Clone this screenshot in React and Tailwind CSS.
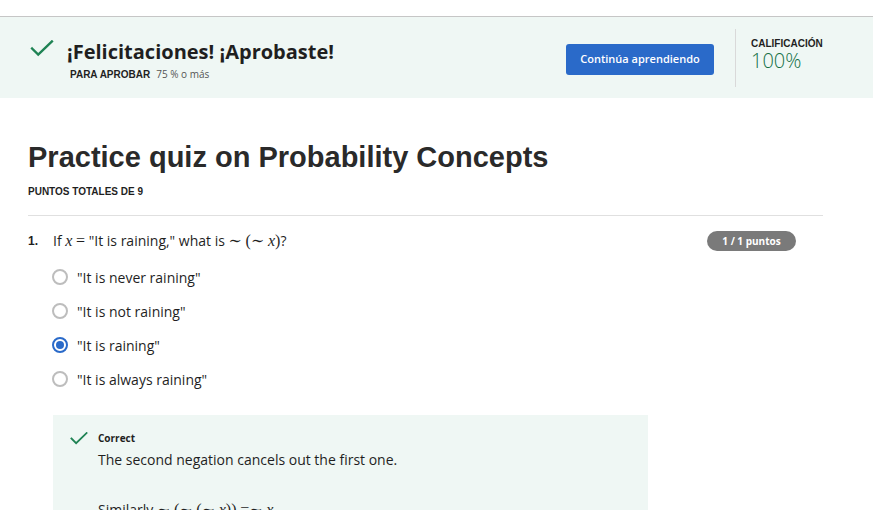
import React from "react";

const open = { fontFamily: '"Open Sans", "Liberation Sans", sans-serif' };

function Check({ className }) {
  return (
    <svg viewBox="0 0 24 18" className={className} fill="none">
      <polyline points="1.5,9 8,15.5 22.5,1.5" stroke="#1f8354" strokeWidth="2.5" strokeLinecap="square" />
    </svg>
  );
}

function Radio({ checked }) {
  if (checked)
    return (
      <span className="flex h-[16px] w-[16px] items-center justify-center rounded-full border-2 border-[#2a6ac9] bg-white">
        <span className="h-[8px] w-[8px] rounded-full bg-[#2a6ac9]" />
      </span>
    );
  return <span className="block h-[16px] w-[16px] rounded-full border-2 border-[#bdbdbd] bg-white" />;
}

const M = ({ children, i }) => (
  <span className={"font-['Liberation_Serif','DejaVu_Serif',serif] text-[16px] " + (i ? "italic" : "")}>{children}</span>
);

export default function App() {
  const options = [
    ['"It is never raining"', false],
    ['"It is not raining"', false],
    ['"It is raining"', true],
    ['"It is always raining"', false],
  ];
  return (
    <div className="h-[510px] w-[873px] overflow-hidden bg-white font-['Liberation_Sans',Arial,sans-serif] text-[#333]">
      <div className="h-4 bg-white" />
      <div className="flex h-[82px] items-stretch border-t border-[#c6c6c6] bg-[#eff7f4]">
        <div className="flex flex-1 items-start pl-[30px] pt-[22px]">
          <Check className="mt-[1px] h-[17px] w-[24px]" />
          <div className="ml-[13px]">
            <div style={open} className="text-[20px] font-bold leading-[26px] text-[#1f1f1f]">
              ¡Felicitaciones! ¡Aprobaste!
            </div>
            <div className="mt-[2px] flex items-baseline pl-[3px]">
              <span className="text-[10px] font-bold text-[#1f1f1f]">PARA APROBAR</span>
              <span style={open} className="ml-[6px] text-[10px] text-[#555]">75 % o más</span>
            </div>
          </div>
        </div>
        <div className="flex items-start pt-[27px]">
          <button
            style={open}
            className="h-[31px] w-[148px] rounded-[3px] bg-[#2a6ac9] text-[11px] font-semibold text-white"
          >
            Continúa aprendiendo
          </button>
        </div>
        <div className="ml-[21px] mt-[12px] mb-[11px] w-px bg-[#d9d9d9]" />
        <div className="w-[137px] pl-[15px] pt-[21px]">
          <div className="text-[10px] font-bold leading-[12px] text-[#1f1f1f]">CALIFICACIÓN</div>
          <div style={open} className="text-[20px] font-light leading-[22px] text-[#147046]">100%</div>
        </div>
      </div>

      <div className="w-[823px] pl-[28px]">
        <h1 className="mt-[42px] text-[29px] font-bold leading-[34px] text-[#2a2a2a]">
          Practice quiz on Probability Concepts
        </h1>
        <div className="mt-[12px] text-[10px] font-bold leading-[12px] text-[#1f1f1f]">PUNTOS TOTALES DE 9</div>
        <div className="mt-[17px] h-px bg-[#e0e0e0]" />
        <div className="mt-[15px] flex items-start">
          <span className="mt-[2px] w-[25px] text-[12px] font-bold leading-[16px] text-[#1f1f1f]">1.</span>
          <div style={open} className="flex-1 text-[14px] leading-[20px] text-[#1f1f1f]">
            If <M i>x</M> <M>=</M> "It is raining," what is <M>∼</M> <M>(∼</M> <M i>x</M><M>)</M>?
          </div>
          <span
            style={open}
            className="mr-[27px] flex h-[20px] w-[89px] items-center justify-center rounded-full bg-[#7a7a7a] text-[10px] font-bold text-white"
          >
            1 / 1 puntos
          </span>
        </div>
        <div className="mt-[16px] flex flex-col gap-[14px] pl-[24px]">
          {options.map(([t, c]) => (
            <div key={t} className="flex h-[20px] items-center">
              <Radio checked={c} />
              <span style={open} className="ml-[9px] text-[14px] text-[#1f1f1f]">{t}</span>
            </div>
          ))}
        </div>
        <div className="ml-[25px] mt-[26px] h-[120px] w-[595px] bg-[#eff7f4] pl-[17px] pt-[16px]">
          <div className="flex items-start">
            <Check className="mt-[1px] h-[13px] w-[18px]" />
            <div className="ml-[10px]">
              <div style={open} className="text-[10px] font-bold leading-[14px] text-[#1f1f1f]">Correct</div>
              <div style={open} className="mt-[5px] text-[14px] leading-[20px] text-[#1f1f1f]">
                The second negation cancels out the first one.
              </div>
              <div style={open} className="mt-[30px] text-[14px] leading-[20px] text-[#1f1f1f]">
                Similarly <M>∼</M> <M>(∼</M> <M>(∼</M> <M i>x</M><M>))</M> <M>=∼</M> <M i>x</M>
              </div>
            </div>
          </div>
        </div>
      </div>
    </div>
  );
}
